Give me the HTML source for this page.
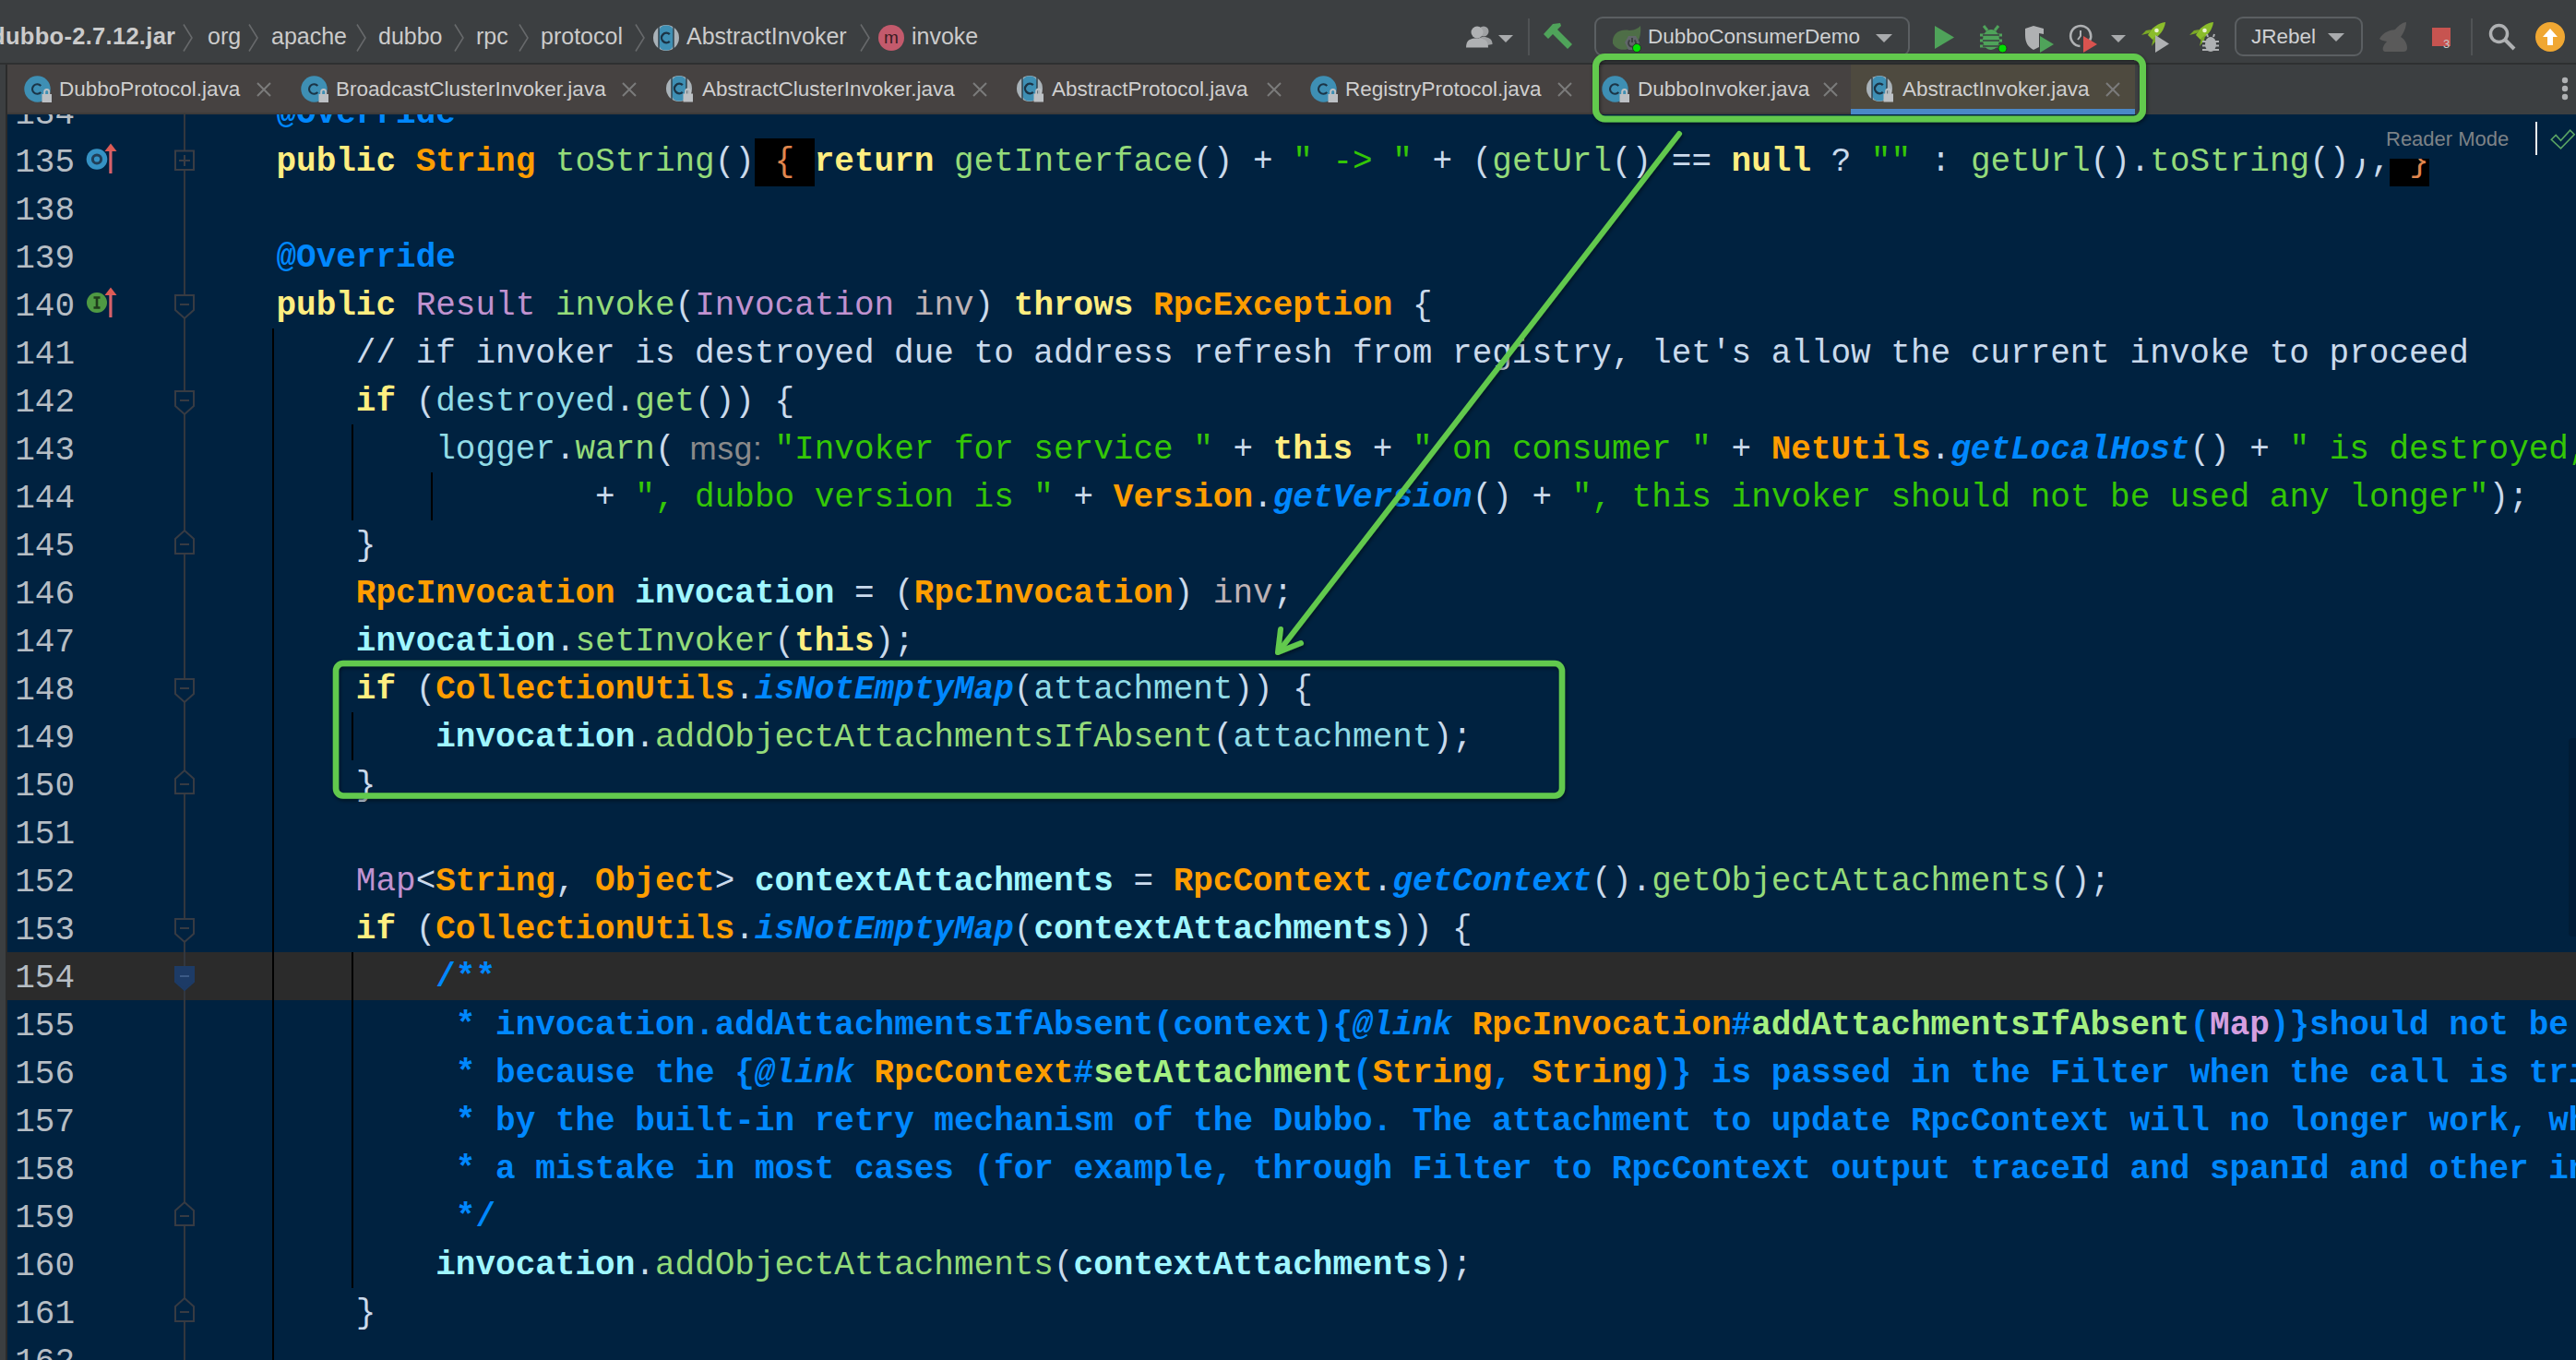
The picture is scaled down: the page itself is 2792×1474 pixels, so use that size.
<!DOCTYPE html><html><head><meta charset="utf-8"><style>
*{margin:0;padding:0;box-sizing:border-box}
html,body{width:2792px;height:1474px;overflow:hidden;background:#3c3f41}
body{position:relative;font-family:"Liberation Sans",sans-serif}
.a{position:absolute}
svg{position:absolute;overflow:visible}
.tabtxt{position:absolute;top:70px;height:54px;line-height:54px;font-size:22.5px;color:#cfcfcf;white-space:pre}
.bc{position:absolute;top:15px;line-height:48px;font-size:25px;color:#cbcbcb;white-space:pre}
.ln{position:absolute;width:70px;text-align:right;font:36px/52px "Liberation Mono",monospace;color:#b6bdc4;white-space:pre}
.code{position:absolute;white-space:pre;font:36px/52px "Liberation Mono",monospace;color:#e1efff}
.kw{color:#ffee80;font-weight:bold}
.ty{color:#ff9d00;font-weight:bold}
.fn{color:#94db7a}
.st{color:#34c706}
.op{color:#cadaec}
.it{color:#c092d0}
.pa{color:#bdb2b5}
.fi{color:#90dbe6}
.lv{color:#a0f6ff;font-weight:bold}
.an{color:#0088ff;font-weight:bold}
.sm{color:#0088ff;font-weight:bold;font-style:italic}
.cm{color:#cadaec}
.jd{color:#0088ff;font-weight:bold}
.jdl{color:#0088ff;font-weight:bold;font-style:italic}
.jty{color:#ff9d00;font-weight:bold}
.jfn{color:#a5f081;font-weight:bold}
.jit{color:#d59fe0;font-weight:bold}
.fold{background:#000;color:#e0864d;display:inline-block;height:52px}
.hint{display:inline-block;font:35px/48px "Liberation Sans",sans-serif;color:#8a8a8a;vertical-align:top}
</style></head><body>
<div class="a" style="left:0;top:0;width:2792px;height:68px;background:#3c3f41"></div>
<div class="a" style="left:0;top:68px;width:2792px;height:2px;background:#2e3031"></div>
<div class="bc" style="left:-10px;font-weight:bold;font-size:25.5px;letter-spacing:0.3px">dubbo-2.7.12.jar</div>
<svg style="left:198px;top:26px" width="12" height="30"><polyline points="1,0.5 10,15 1,29.5" fill="none" stroke="#67696b" stroke-width="1.6"/></svg>
<div class="bc" style="left:225px">org</div>
<svg style="left:269px;top:26px" width="12" height="30"><polyline points="1,0.5 10,15 1,29.5" fill="none" stroke="#67696b" stroke-width="1.6"/></svg>
<div class="bc" style="left:294px">apache</div>
<svg style="left:386px;top:26px" width="12" height="30"><polyline points="1,0.5 10,15 1,29.5" fill="none" stroke="#67696b" stroke-width="1.6"/></svg>
<div class="bc" style="left:410px">dubbo</div>
<svg style="left:492px;top:26px" width="12" height="30"><polyline points="1,0.5 10,15 1,29.5" fill="none" stroke="#67696b" stroke-width="1.6"/></svg>
<div class="bc" style="left:516px">rpc</div>
<svg style="left:562px;top:26px" width="12" height="30"><polyline points="1,0.5 10,15 1,29.5" fill="none" stroke="#67696b" stroke-width="1.6"/></svg>
<div class="bc" style="left:586px">protocol</div>
<svg style="left:688px;top:26px" width="12" height="30"><polyline points="1,0.5 10,15 1,29.5" fill="none" stroke="#67696b" stroke-width="1.6"/></svg>
<svg style="left:708px;top:27px" width="28" height="28" viewBox="0 0 28 28"><circle cx="14" cy="14" r="14" fill="#a9b2b8"/><rect x="6" y="0.5" width="16" height="27" rx="7" fill="#3e8fb4"/><rect x="5" y="2" width="2" height="24" fill="#2b3a44" opacity="0.7"/><rect x="21" y="2" width="2" height="24" fill="#2b3a44" opacity="0.7"/><path d="M17.8 10.2 A5.2 5.2 0 1 0 17.8 17.8" fill="none" stroke="#1b3446" stroke-width="2.4"/></svg>
<div class="bc" style="left:744px">AbstractInvoker</div>
<svg style="left:932px;top:26px" width="12" height="30"><polyline points="1,0.5 10,15 1,29.5" fill="none" stroke="#67696b" stroke-width="1.6"/></svg>
<svg style="left:952px;top:27px" width="28" height="28"><circle cx="14" cy="14" r="14" fill="#c35a6c"/><text x="14" y="20" text-anchor="middle" font-family="Liberation Sans" font-size="19" fill="#3a1c22">m</text></svg>
<div class="bc" style="left:988px">invoke</div>
<svg style="left:1589px;top:27px" width="30" height="25" viewBox="0 0 30 25"><circle cx="19" cy="7" r="5.5" fill="#9fa1a3"/><path d="M11 24 C11 15 15 13 19 13 C24 13 28 15 28.5 20 L28.5 21 L11 24Z" fill="#9fa1a3"/><circle cx="12" cy="8" r="6.5" fill="#afb1b3"/><path d="M0 24.5 C0 16 5 14.5 12 14.5 C19 14.5 24 16 24 24.5Z" fill="#afb1b3"/></svg>
<svg style="left:1624px;top:38px" width="16" height="8"><polygon points="0,0 16,0 8.0,8" fill="#a9abad"/></svg>
<div class="a" style="left:1656px;top:20px;width:2px;height:40px;background:#505355"></div>
<svg style="left:1673px;top:25px" width="32" height="30" viewBox="0 0 32 30"><path d="M0 12 L10 1 L18 0 L19 3 L15 7 L31 23 L26 28 L10 12 L5 17Z" fill="#4fa35a"/></svg>
<div class="a" style="left:1728px;top:18px;width:342px;height:43px;border:2px solid #5b5f62;border-radius:9px"></div>
<svg style="left:1746px;top:27px" width="36" height="32" viewBox="0 0 36 32"><path d="M2 20 C1 9 10 4 20 6 C26 6 30 3 32 1 C33 10 31 20 22 25 C15 28 6 28 2 20Z" fill="#4e6e47"/><polygon points="19,12 27,12 31,19 27,27 19,27 15,19" fill="#61666a"/><path d="M20.5 16.5 a4 4 0 1 0 5 0" fill="none" stroke="#3a3d40" stroke-width="1.8"/><line x1="23" y1="14" x2="23" y2="19" stroke="#3a3d40" stroke-width="1.8"/><circle cx="28" cy="25" r="4.5" fill="#00e000" stroke="#1f3d1f" stroke-width="1"/></svg>
<div class="a" style="left:1786px;top:16px;line-height:48px;font-size:22.5px;color:#cfd1d3;white-space:pre">DubboConsumerDemo</div>
<svg style="left:2033px;top:37px" width="18" height="9"><polygon points="0,0 18,0 9.0,9" fill="#a9abad"/></svg>
<svg style="left:2097px;top:28px" width="22" height="25"><polygon points="0,0 21,12.5 0,25" fill="#4fa35a"/></svg>
<svg style="left:2145px;top:25px" width="30" height="32" viewBox="0 0 30 32"><path d="M5 3 L9 8 M21 3 L17 8" stroke="#4fa35a" stroke-width="3"/><ellipse cx="13" cy="18" rx="9" ry="11" fill="#4fa35a"/><path d="M1 13 H25 M1 19 H25 M1 25 H25" stroke="#4fa35a" stroke-width="3"/><path d="M4 13 H22 M4 19 H22 M4 25 H22" stroke="#3c3f41" stroke-width="1.5"/><circle cx="25.5" cy="27.5" r="4.5" fill="#00e000" stroke="#1f3d1f" stroke-width="1"/></svg>
<svg style="left:2195px;top:28px" width="32" height="29" viewBox="0 0 32 29"><path d="M0 3 L9 0 L20 3 L20 9 L15 8 L15 23 L9 26 C3 23 0 18 0 10Z" fill="#afb1b3"/><polygon points="16,11 31,20 16,29" fill="#4fa35a"/></svg>
<svg style="left:2243px;top:27px" width="32" height="30" viewBox="0 0 32 30"><path d="M22 17 A11 11 0 1 0 11.5 23" fill="none" stroke="#afb1b3" stroke-width="2.6"/><path d="M12 6 V12 L9 16" fill="none" stroke="#afb1b3" stroke-width="2"/><polygon points="15,12 30,21 15,30" fill="#d9534f"/></svg>
<svg style="left:2288px;top:38px" width="16" height="8"><polygon points="0,0 16,0 8.0,8" fill="#a9abad"/></svg>
<svg style="left:2320px;top:24px" width="28" height="26" viewBox="0 0 28 26"><path d="M8 14 C12 6 19 1 27 0 C26 8 21 15 13 19Z" fill="#8bbd2b"/><path d="M9 12 L1 14 L6 9 L12 8Z M14 17 L12 26 L17 20 L18 14Z" fill="#7aa826"/><circle cx="17.5" cy="9" r="2.3" fill="#e8f0d0"/></svg>
<svg style="left:2336px;top:38px" width="16" height="19"><polygon points="0,0 15,9.5 0,19" fill="#afb1b3"/></svg>
<svg style="left:2372px;top:24px" width="28" height="26" viewBox="0 0 28 26"><path d="M8 14 C12 6 19 1 27 0 C26 8 21 15 13 19Z" fill="#8bbd2b"/><path d="M9 12 L1 14 L6 9 L12 8Z M14 17 L12 26 L17 20 L18 14Z" fill="#7aa826"/><circle cx="17.5" cy="9" r="2.3" fill="#e8f0d0"/></svg>
<svg style="left:2387px;top:36px" width="18" height="20" viewBox="0 0 18 20"><ellipse cx="9" cy="12" rx="6" ry="8" fill="#afb1b3"/><path d="M0 9 H18 M0 13.5 H18 M0 18 H18" stroke="#afb1b3" stroke-width="2"/><path d="M5 1 L6 4 M13 1 L12 4" stroke="#afb1b3" stroke-width="2"/></svg>
<div class="a" style="left:2422px;top:18px;width:139px;height:43px;border:2px solid #5b5f62;border-radius:9px"></div>
<div class="a" style="left:2440px;top:16px;line-height:48px;font-size:22.5px;color:#cfd1d3;white-space:pre">JRebel</div>
<svg style="left:2523px;top:36px" width="18" height="9"><polygon points="0,0 18,0 9.0,9" fill="#a9abad"/></svg>
<svg style="left:2578px;top:24px" width="33" height="33" viewBox="0 0 33 33"><path d="M1 18 C6 10 12 9 18 8 C22 3 27 0 30 0 C30 6 27 12 24 16 C29 19 31 24 31 28 C31 31 29 32 27 32 L8 32 C5 32 4 30 5 27 C6 24 8 22 9 21 C6 20 3 20 1 18Z" fill="#5a5a5a"/></svg>
<div class="a" style="left:2636px;top:30px;width:20px;height:20px;background:#c75450"></div>
<div class="a" style="left:2648px;top:41px;font-size:13px;line-height:14px;color:#c8c8c8">3</div>
<div class="a" style="left:2678px;top:20px;width:2px;height:40px;background:#505355"></div>
<svg style="left:2697px;top:25px" width="30" height="30" viewBox="0 0 30 30"><circle cx="11.5" cy="11.5" r="9" fill="none" stroke="#afb1b3" stroke-width="3.5"/><line x1="18" y1="18" x2="28" y2="28" stroke="#afb1b3" stroke-width="4"/></svg>
<svg style="left:2748px;top:24px" width="32" height="32" viewBox="0 0 32 32"><circle cx="16" cy="16" r="16" fill="#f0a732"/><polygon points="16,7 24,16 19,16 19,25 13,25 13,16 8,16" fill="#fff"/></svg>
<div class="a" style="left:0;top:70px;width:2792px;height:54px;background:#3c3f41"></div>
<div class="a" style="left:8px;top:70px;width:1998px;height:54px;background:#464241"></div>
<div class="a" style="left:8px;top:121.5px;width:1998px;height:2px;background:#3d3b3a"></div>
<div class="a" style="left:2006px;top:70px;width:308px;height:54px;background:#4e4a3f"></div>
<div class="a" style="left:2006px;top:118px;width:308px;height:6px;background:#4a88c7"></div>
<svg style="left:26px;top:82px" width="29" height="29" viewBox="0 0 29 29"><circle cx="14.5" cy="14.5" r="14.2" fill="#3e8fb4"/><path d="M18.3 11 A5.3 5.3 0 1 0 18.3 18" fill="none" stroke="#1b3446" stroke-width="2.1"/><rect x="19.5" y="20" width="10.5" height="9" fill="#bcc0c4"/><path d="M22.2 20.5 V17.5 a2.5 2.5 0 0 1 5 0 V20.5" fill="none" stroke="#bcc0c4" stroke-width="2"/></svg>
<div class="tabtxt" style="left:64px">DubboProtocol.java</div>
<svg style="left:278px;top:89px" width="16" height="16"><path d="M1 1 L15 15 M15 1 L1 15" stroke="#7b7b7b" stroke-width="2"/></svg>
<svg style="left:326px;top:82px" width="29" height="29" viewBox="0 0 29 29"><circle cx="14.5" cy="14.5" r="14.2" fill="#3e8fb4"/><path d="M18.3 11 A5.3 5.3 0 1 0 18.3 18" fill="none" stroke="#1b3446" stroke-width="2.1"/><rect x="19.5" y="20" width="10.5" height="9" fill="#bcc0c4"/><path d="M22.2 20.5 V17.5 a2.5 2.5 0 0 1 5 0 V20.5" fill="none" stroke="#bcc0c4" stroke-width="2"/></svg>
<div class="tabtxt" style="left:364px">BroadcastClusterInvoker.java</div>
<svg style="left:674px;top:89px" width="16" height="16"><path d="M1 1 L15 15 M15 1 L1 15" stroke="#7b7b7b" stroke-width="2"/></svg>
<svg style="left:722px;top:82px" width="28" height="28" viewBox="0 0 28 28"><circle cx="14" cy="14" r="14" fill="#a9b2b8"/><rect x="6" y="0.5" width="16" height="27" rx="7" fill="#3e8fb4"/><rect x="5" y="2" width="2" height="24" fill="#2b3a44" opacity="0.7"/><rect x="21" y="2" width="2" height="24" fill="#2b3a44" opacity="0.7"/><path d="M17.8 10.2 A5.2 5.2 0 1 0 17.8 17.8" fill="none" stroke="#1b3446" stroke-width="2.4"/><rect x="18.5" y="19.5" width="10.5" height="9" fill="#bcc0c4"/><path d="M21.2 20 V17 a2.5 2.5 0 0 1 5 0 V20" fill="none" stroke="#bcc0c4" stroke-width="2"/></svg>
<div class="tabtxt" style="left:761px">AbstractClusterInvoker.java</div>
<svg style="left:1054px;top:89px" width="16" height="16"><path d="M1 1 L15 15 M15 1 L1 15" stroke="#7b7b7b" stroke-width="2"/></svg>
<svg style="left:1102px;top:82px" width="28" height="28" viewBox="0 0 28 28"><circle cx="14" cy="14" r="14" fill="#a9b2b8"/><rect x="6" y="0.5" width="16" height="27" rx="7" fill="#3e8fb4"/><rect x="5" y="2" width="2" height="24" fill="#2b3a44" opacity="0.7"/><rect x="21" y="2" width="2" height="24" fill="#2b3a44" opacity="0.7"/><path d="M17.8 10.2 A5.2 5.2 0 1 0 17.8 17.8" fill="none" stroke="#1b3446" stroke-width="2.4"/><rect x="18.5" y="19.5" width="10.5" height="9" fill="#bcc0c4"/><path d="M21.2 20 V17 a2.5 2.5 0 0 1 5 0 V20" fill="none" stroke="#bcc0c4" stroke-width="2"/></svg>
<div class="tabtxt" style="left:1140px">AbstractProtocol.java</div>
<svg style="left:1373px;top:89px" width="16" height="16"><path d="M1 1 L15 15 M15 1 L1 15" stroke="#7b7b7b" stroke-width="2"/></svg>
<svg style="left:1420px;top:82px" width="29" height="29" viewBox="0 0 29 29"><circle cx="14.5" cy="14.5" r="14.2" fill="#3e8fb4"/><path d="M18.3 11 A5.3 5.3 0 1 0 18.3 18" fill="none" stroke="#1b3446" stroke-width="2.1"/><rect x="19.5" y="20" width="10.5" height="9" fill="#bcc0c4"/><path d="M22.2 20.5 V17.5 a2.5 2.5 0 0 1 5 0 V20.5" fill="none" stroke="#bcc0c4" stroke-width="2"/></svg>
<div class="tabtxt" style="left:1458px">RegistryProtocol.java</div>
<svg style="left:1688px;top:89px" width="16" height="16"><path d="M1 1 L15 15 M15 1 L1 15" stroke="#7b7b7b" stroke-width="2"/></svg>
<svg style="left:1736px;top:82px" width="29" height="29" viewBox="0 0 29 29"><circle cx="14.5" cy="14.5" r="14.2" fill="#3e8fb4"/><path d="M18.3 11 A5.3 5.3 0 1 0 18.3 18" fill="none" stroke="#1b3446" stroke-width="2.1"/><rect x="19.5" y="20" width="10.5" height="9" fill="#bcc0c4"/><path d="M22.2 20.5 V17.5 a2.5 2.5 0 0 1 5 0 V20.5" fill="none" stroke="#bcc0c4" stroke-width="2"/></svg>
<div class="tabtxt" style="left:1775px">DubboInvoker.java</div>
<svg style="left:1976px;top:89px" width="16" height="16"><path d="M1 1 L15 15 M15 1 L1 15" stroke="#7b7b7b" stroke-width="2"/></svg>
<svg style="left:2023px;top:82px" width="28" height="28" viewBox="0 0 28 28"><circle cx="14" cy="14" r="14" fill="#a9b2b8"/><rect x="6" y="0.5" width="16" height="27" rx="7" fill="#3e8fb4"/><rect x="5" y="2" width="2" height="24" fill="#2b3a44" opacity="0.7"/><rect x="21" y="2" width="2" height="24" fill="#2b3a44" opacity="0.7"/><path d="M17.8 10.2 A5.2 5.2 0 1 0 17.8 17.8" fill="none" stroke="#1b3446" stroke-width="2.4"/><rect x="18.5" y="19.5" width="10.5" height="9" fill="#bcc0c4"/><path d="M21.2 20 V17 a2.5 2.5 0 0 1 5 0 V20" fill="none" stroke="#bcc0c4" stroke-width="2"/></svg>
<div class="tabtxt" style="left:2062px">AbstractInvoker.java</div>
<svg style="left:2282px;top:89px" width="16" height="16"><path d="M1 1 L15 15 M15 1 L1 15" stroke="#7b7b7b" stroke-width="2"/></svg>
<svg style="left:2776px;top:83px" width="8" height="26"><circle cx="4" cy="4" r="3.2" fill="#afb1b3"/><circle cx="4" cy="13" r="3.2" fill="#afb1b3"/><circle cx="4" cy="22" r="3.2" fill="#afb1b3"/></svg>
<div class="a" style="left:0;top:70px;width:6px;height:1404px;background:#3c3f41"></div>
<div class="a" style="left:6px;top:70px;width:2px;height:1404px;background:#2b2b2b"></div>
<div class="a" style="left:8px;top:124px;width:2784px;height:1350px;background:#002240;overflow:hidden">
<div class="a" style="left:0;top:908px;width:2784px;height:52px;background:#2b2b2b"></div>
<div class="a" style="left:190.5px;top:0;width:2.5px;height:1400px;background:#33373e"></div>
<div class="a" style="left:286.5px;top:232px;width:2px;height:1118px;background:#000"></div>
<div class="a" style="left:372.5px;top:336px;width:2px;height:104px;background:#000"></div>
<div class="a" style="left:458.5px;top:388px;width:2px;height:52px;background:#000"></div>
<div class="a" style="left:372.5px;top:648px;width:2px;height:52px;background:#000"></div>
<div class="a" style="left:372.5px;top:908px;width:2px;height:364px;background:#000"></div>
<svg style="left:180px;top:190.5px" width="24" height="32" viewBox="0 0 24 32"><path d="M2 5 H22 V21 L12 30 L2 21Z" fill="#002240" stroke="#373b43" stroke-width="2"/><line x1="7" y1="15" x2="17" y2="15" stroke="#373b43" stroke-width="2"/></svg>
<svg style="left:180px;top:294.5px" width="24" height="32" viewBox="0 0 24 32"><path d="M2 5 H22 V21 L12 30 L2 21Z" fill="#002240" stroke="#373b43" stroke-width="2"/><line x1="7" y1="15" x2="17" y2="15" stroke="#373b43" stroke-width="2"/></svg>
<svg style="left:180px;top:606.5px" width="24" height="32" viewBox="0 0 24 32"><path d="M2 5 H22 V21 L12 30 L2 21Z" fill="#002240" stroke="#373b43" stroke-width="2"/><line x1="7" y1="15" x2="17" y2="15" stroke="#373b43" stroke-width="2"/></svg>
<svg style="left:180px;top:866.5px" width="24" height="32" viewBox="0 0 24 32"><path d="M2 5 H22 V21 L12 30 L2 21Z" fill="#002240" stroke="#373b43" stroke-width="2"/><line x1="7" y1="15" x2="17" y2="15" stroke="#373b43" stroke-width="2"/></svg>
<svg style="left:180px;top:448.5px" width="24" height="32" viewBox="0 0 24 32"><path d="M2 27 H22 V11 L12 2 L2 11Z" fill="#002240" stroke="#373b43" stroke-width="2"/><line x1="7" y1="17" x2="17" y2="17" stroke="#373b43" stroke-width="2"/></svg>
<svg style="left:180px;top:708.5px" width="24" height="32" viewBox="0 0 24 32"><path d="M2 27 H22 V11 L12 2 L2 11Z" fill="#002240" stroke="#373b43" stroke-width="2"/><line x1="7" y1="17" x2="17" y2="17" stroke="#373b43" stroke-width="2"/></svg>
<svg style="left:180px;top:1176.5px" width="24" height="32" viewBox="0 0 24 32"><path d="M2 27 H22 V11 L12 2 L2 11Z" fill="#002240" stroke="#373b43" stroke-width="2"/><line x1="7" y1="17" x2="17" y2="17" stroke="#373b43" stroke-width="2"/></svg>
<svg style="left:180px;top:1280.5px" width="24" height="32" viewBox="0 0 24 32"><path d="M2 27 H22 V11 L12 2 L2 11Z" fill="#002240" stroke="#373b43" stroke-width="2"/><line x1="7" y1="17" x2="17" y2="17" stroke="#373b43" stroke-width="2"/></svg>
<svg style="left:180px;top:918.5px" width="24" height="32" viewBox="0 0 24 32"><path d="M2 5 H22 V21 L12 30 L2 21Z" fill="#1d3b66" stroke="#1d3b66" stroke-width="2"/><line x1="7" y1="15" x2="17" y2="15" stroke="#3b5a86" stroke-width="2"/></svg>
<svg style="left:180px;top:38px" width="24" height="24" viewBox="0 0 24 24"><rect x="2" y="1.5" width="20" height="20.5" fill="#002240" stroke="#3a3d44" stroke-width="2"/><path d="M6 12 H18 M12 6 V18" stroke="#3a3d44" stroke-width="2"/></svg>
<svg style="left:85px;top:37px" width="24" height="24" viewBox="0 0 24 24"><circle cx="12" cy="11.5" r="11.3" fill="#3592c4"/><circle cx="12" cy="11.5" r="4.6" fill="none" stroke="#213f57" stroke-width="3"/></svg>
<svg style="left:105px;top:31px" width="14" height="34" viewBox="0 0 14 34"><polygon points="0.5,9 13.5,9 7,0.5" fill="#dd5b55"/><rect x="5.3" y="8" width="3.2" height="25" fill="#d8616a"/></svg>
<svg style="left:85px;top:192px" width="24" height="24" viewBox="0 0 24 24"><circle cx="12" cy="12" r="11" fill="#4f9a43"/><path d="M8.5 6.5 H15.5 M12 6.5 V17.5 M8.5 17.5 H15.5" stroke="#1f3b1c" stroke-width="2.6"/></svg>
<svg style="left:105px;top:187px" width="14" height="34" viewBox="0 0 14 34"><polygon points="0.5,9 13.5,9 7,0.5" fill="#dd5b55"/><rect x="5.3" y="8" width="3.2" height="25" fill="#d8616a"/></svg>
<div class="ln" style="left:3px;top:-25px">134</div>
<div class="code" style="left:205.0px;top:-26px">    <span class="an">@Override</span></div>
<div class="ln" style="left:3px;top:27px">135</div>
<div class="code" style="left:205.0px;top:26px">    <span class="kw">public</span> <span class="ty">String</span> <span class="fn">toString</span><span class="op">()</span><span class="fold" style="width:64.8px;text-align:center">{</span><span class="kw">return</span> <span class="fn">getInterface</span><span class="op">()</span> <span class="op">+</span> <span class="st">" -&gt; "</span> <span class="op">+</span> <span class="op">(</span><span class="fn">getUrl</span><span class="op">()</span> <span class="op">==</span> <span class="kw">null</span> <span class="op">?</span> <span class="st">""</span> <span class="op">:</span> <span class="fn">getUrl</span><span class="op">().</span><span class="fn">toString</span><span class="op">());</span><span class="fold" style="width:43.2px;text-align:right;padding-right:0">}</span></div>
<div class="ln" style="left:3px;top:79px">138</div>
<div class="code" style="left:205.0px;top:78px"></div>
<div class="ln" style="left:3px;top:131px">139</div>
<div class="code" style="left:205.0px;top:130px">    <span class="an">@Override</span></div>
<div class="ln" style="left:3px;top:183px">140</div>
<div class="code" style="left:205.0px;top:182px">    <span class="kw">public</span> <span class="it">Result</span> <span class="fn">invoke</span><span class="op">(</span><span class="it">Invocation</span> <span class="pa">inv</span><span class="op">)</span> <span class="kw">throws</span> <span class="ty">RpcException</span> <span class="op">{</span></div>
<div class="ln" style="left:3px;top:235px">141</div>
<div class="code" style="left:205.0px;top:234px">        <span class="cm">// if invoker is destroyed due to address refresh from registry, let's allow the current invoke to proceed</span></div>
<div class="ln" style="left:3px;top:287px">142</div>
<div class="code" style="left:205.0px;top:286px">        <span class="kw">if</span> <span class="op">(</span><span class="fi">destroyed</span><span class="op">.</span><span class="fn">get</span><span class="op">())</span> <span class="op">{</span></div>
<div class="ln" style="left:3px;top:339px">143</div>
<div class="code" style="left:205.0px;top:338px">            <span class="fi">logger</span><span class="op">.</span><span class="fn">warn</span><span class="op">(</span><span class="hint" style="width:108px;padding-left:16px;letter-spacing:0.8px">msg:</span><span class="st">"Invoker for service "</span> <span class="op">+</span> <span class="kw">this</span> <span class="op">+</span> <span class="st">" on consumer "</span> <span class="op">+</span> <span class="ty">NetUtils</span><span class="op">.</span><span class="sm">getLocalHost</span><span class="op">()</span> <span class="op">+</span> <span class="st">" is destroyed, "</span></div>
<div class="ln" style="left:3px;top:391px">144</div>
<div class="code" style="left:205.0px;top:390px">                    <span class="op">+</span> <span class="st">", dubbo version is "</span> <span class="op">+</span> <span class="ty">Version</span><span class="op">.</span><span class="sm">getVersion</span><span class="op">()</span> <span class="op">+</span> <span class="st">", this invoker should not be used any longer"</span><span class="op">);</span></div>
<div class="ln" style="left:3px;top:443px">145</div>
<div class="code" style="left:205.0px;top:442px">        <span class="op">}</span></div>
<div class="ln" style="left:3px;top:495px">146</div>
<div class="code" style="left:205.0px;top:494px">        <span class="ty">RpcInvocation</span> <span class="lv">invocation</span> <span class="op">=</span> <span class="op">(</span><span class="ty">RpcInvocation</span><span class="op">)</span> <span class="pa">inv</span><span class="op">;</span></div>
<div class="ln" style="left:3px;top:547px">147</div>
<div class="code" style="left:205.0px;top:546px">        <span class="lv">invocation</span><span class="op">.</span><span class="fn">setInvoker</span><span class="op">(</span><span class="kw">this</span><span class="op">);</span></div>
<div class="ln" style="left:3px;top:599px">148</div>
<div class="code" style="left:205.0px;top:598px">        <span class="kw">if</span> <span class="op">(</span><span class="ty">CollectionUtils</span><span class="op">.</span><span class="sm">isNotEmptyMap</span><span class="op">(</span><span class="fi">attachment</span><span class="op">))</span> <span class="op">{</span></div>
<div class="ln" style="left:3px;top:651px">149</div>
<div class="code" style="left:205.0px;top:650px">            <span class="lv">invocation</span><span class="op">.</span><span class="fn">addObjectAttachmentsIfAbsent</span><span class="op">(</span><span class="fi">attachment</span><span class="op">);</span></div>
<div class="ln" style="left:3px;top:703px">150</div>
<div class="code" style="left:205.0px;top:702px">        <span class="op">}</span></div>
<div class="ln" style="left:3px;top:755px">151</div>
<div class="code" style="left:205.0px;top:754px"></div>
<div class="ln" style="left:3px;top:807px">152</div>
<div class="code" style="left:205.0px;top:806px">        <span class="it">Map</span><span class="op">&lt;</span><span class="ty">String</span><span class="op">,</span> <span class="ty">Object</span><span class="op">&gt;</span> <span class="lv">contextAttachments</span> <span class="op">=</span> <span class="ty">RpcContext</span><span class="op">.</span><span class="sm">getContext</span><span class="op">().</span><span class="fn">getObjectAttachments</span><span class="op">();</span></div>
<div class="ln" style="left:3px;top:859px">153</div>
<div class="code" style="left:205.0px;top:858px">        <span class="kw">if</span> <span class="op">(</span><span class="ty">CollectionUtils</span><span class="op">.</span><span class="sm">isNotEmptyMap</span><span class="op">(</span><span class="lv">contextAttachments</span><span class="op">))</span> <span class="op">{</span></div>
<div class="ln" style="left:3px;top:911px">154</div>
<div class="code" style="left:205.0px;top:910px">            <span class="jd">/**</span></div>
<div class="ln" style="left:3px;top:963px">155</div>
<div class="code" style="left:205.0px;top:962px">             <span class="jd">* invocation.addAttachmentsIfAbsent(context){</span><span class="jdl">@link</span> <span class="jty">RpcInvocation</span><span class="jd">#</span><span class="jfn">addAttachmentsIfAbsent</span><span class="jd">(</span><span class="jit">Map</span><span class="jd">)}</span><span class="jd">should not be used here,</span></div>
<div class="ln" style="left:3px;top:1015px">156</div>
<div class="code" style="left:205.0px;top:1014px">             <span class="jd">* because the {</span><span class="jdl">@link</span> <span class="jty">RpcContext</span><span class="jd">#</span><span class="jfn">setAttachment</span><span class="jd">(</span><span class="jty">String</span><span class="jd">, </span><span class="jty">String</span><span class="jd">)}</span><span class="jd"> is passed in the Filter when the call is triggered</span></div>
<div class="ln" style="left:3px;top:1067px">157</div>
<div class="code" style="left:205.0px;top:1066px">             <span class="jd">* by the built-in retry mechanism of the Dubbo. The attachment to update RpcContext will no longer work, which is</span></div>
<div class="ln" style="left:3px;top:1119px">158</div>
<div class="code" style="left:205.0px;top:1118px">             <span class="jd">* a mistake in most cases (for example, through Filter to RpcContext output traceId and spanId and other information).</span></div>
<div class="ln" style="left:3px;top:1171px">159</div>
<div class="code" style="left:205.0px;top:1170px">             <span class="jd">*/</span></div>
<div class="ln" style="left:3px;top:1223px">160</div>
<div class="code" style="left:205.0px;top:1222px">            <span class="lv">invocation</span><span class="op">.</span><span class="fn">addObjectAttachments</span><span class="op">(</span><span class="lv">contextAttachments</span><span class="op">);</span></div>
<div class="ln" style="left:3px;top:1275px">161</div>
<div class="code" style="left:205.0px;top:1274px">        <span class="op">}</span></div>
<div class="ln" style="left:3px;top:1327px">162</div>
<div class="code" style="left:205.0px;top:1326px"></div>
<div class="a" style="left:2776px;top:676px;width:8px;height:215px;background:#001c36;border-radius:4px 0 0 4px"></div>
<div class="a" style="left:2538px;top:0;width:300px;height:48px;background:#002240"></div>
<div class="a" style="left:2578px;top:7px;line-height:40px;font-size:22px;color:#7d8287;white-space:pre">Reader Mode</div>
<div class="a" style="left:2739.8px;top:8px;width:2.4px;height:36px;background:#f0f0f0"></div>
<svg style="left:2756px;top:16px" width="28" height="22" viewBox="0 0 28 22"><polygon points="1.3,11.3 6.2,6.5 11.5,12.2 21.6,1.2 26.2,5.8 11.5,20.8" fill="none" stroke="#5aa563" stroke-width="1.6"/></svg>
</div>
<svg style="left:0;top:0" width="2792" height="1474" viewBox="0 0 2792 1474"><defs><filter id="sh" x="-5%" y="-5%" width="110%" height="110%"><feDropShadow dx="1" dy="2" stdDeviation="2" flood-color="#000" flood-opacity="0.5"/></filter></defs><g filter="url(#sh)" fill="none" stroke="#62c94e" stroke-linecap="round" stroke-linejoin="round"><rect x="1729.5" y="61.5" width="593" height="67.5" rx="10" stroke-width="7"/><rect x="364" y="719" width="1329" height="143.5" rx="8" stroke-width="6.5"/><line x1="1820" y1="145" x2="1386" y2="706" stroke-width="6"/><polyline points="1388,682 1385,707 1410,697" stroke-width="6"/></g></svg>
</body></html>
